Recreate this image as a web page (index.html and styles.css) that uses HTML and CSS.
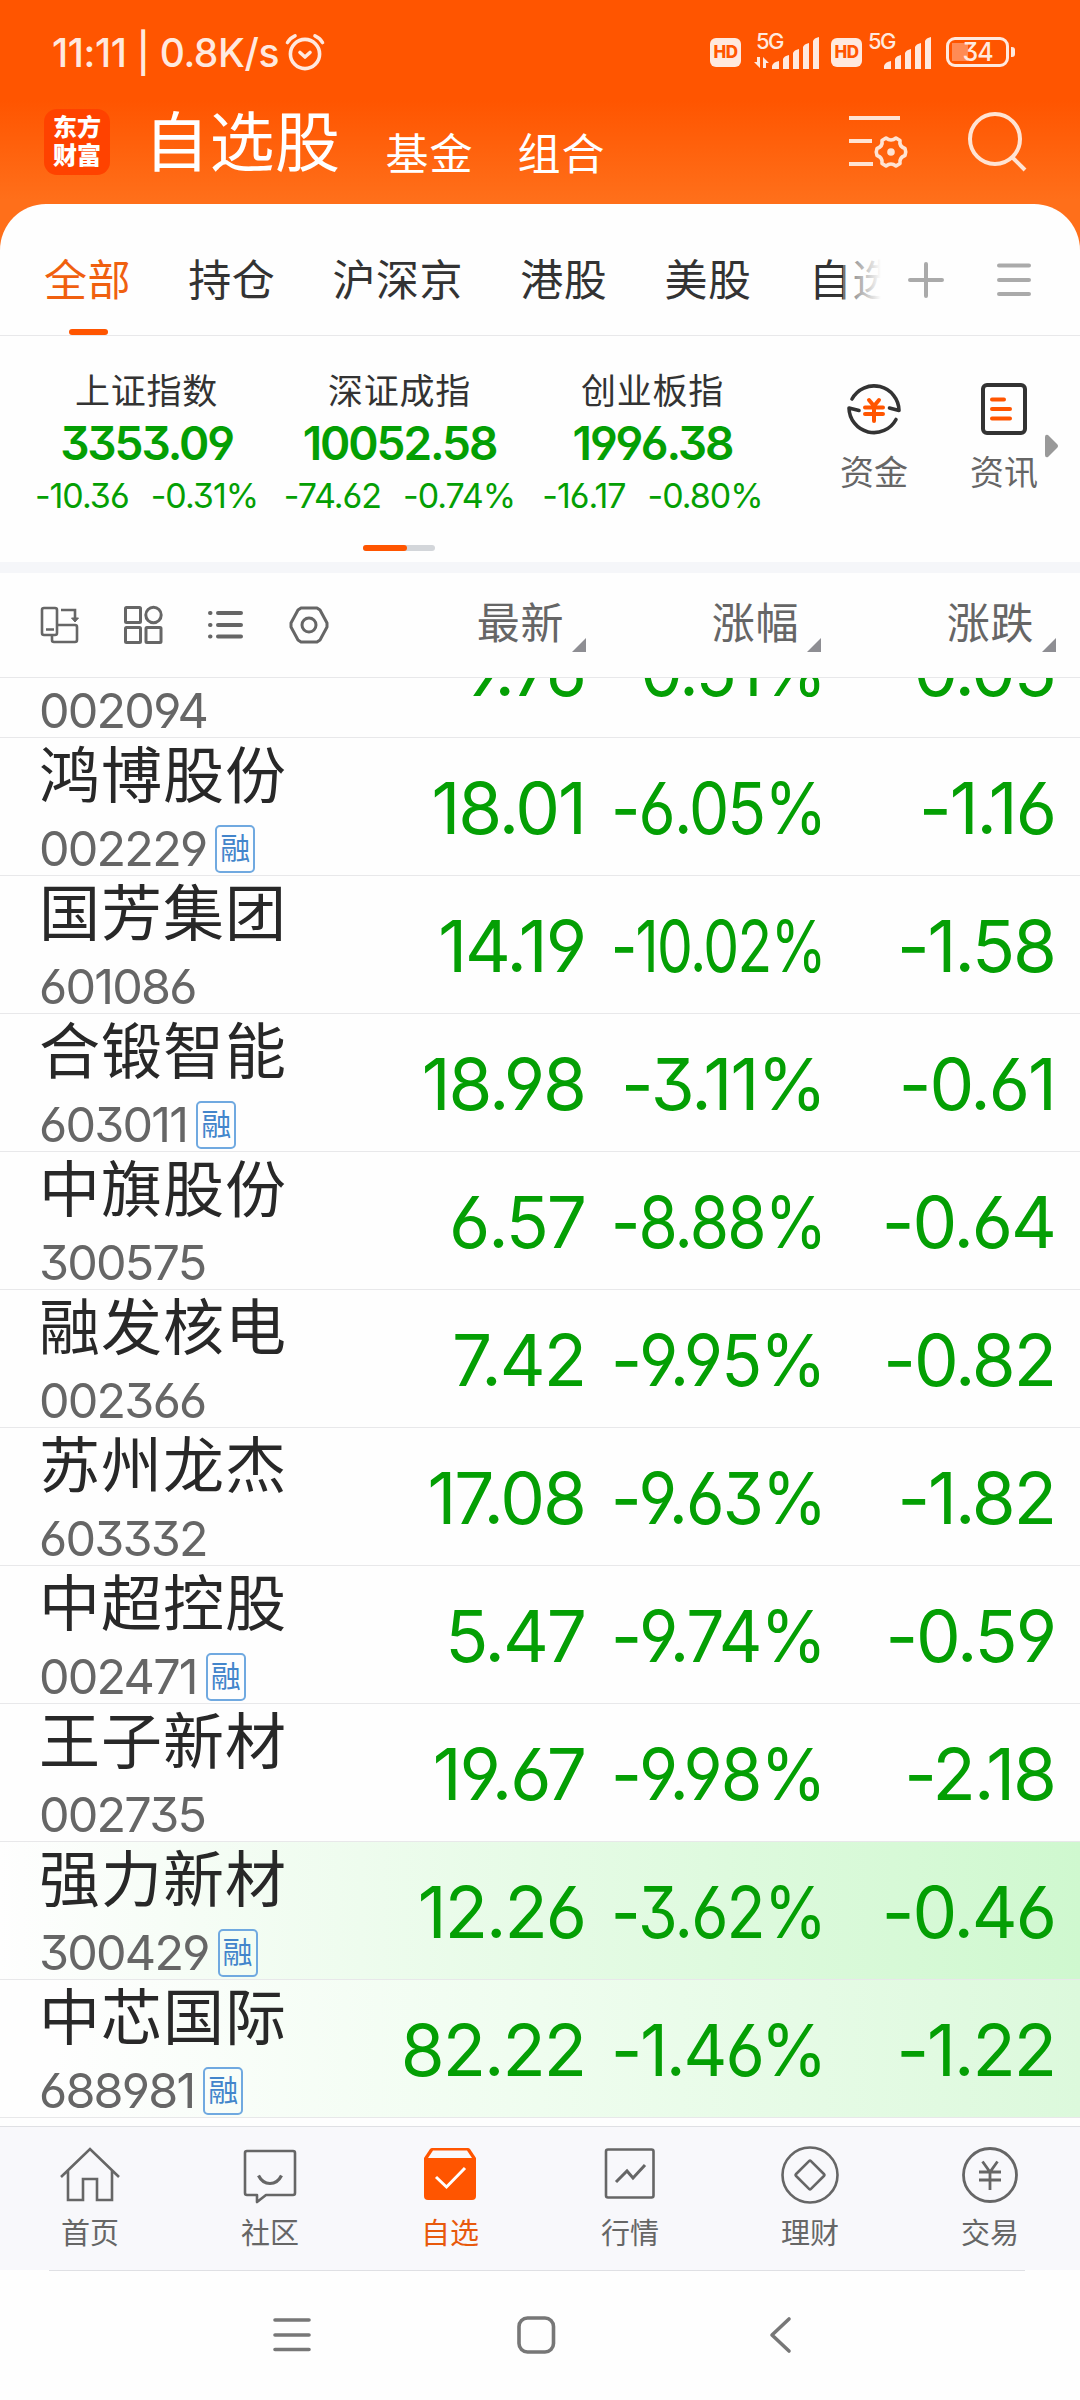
FILE: index.html
```html
<!DOCTYPE html>
<html lang="zh-CN">
<head>
  <meta charset="UTF-8" />
  <meta name="viewport" content="width=device-width, initial-scale=1.0"/>
  <title>自选股</title>
  <link rel="stylesheet" href="styles.css">
</head>
<body>
  <div class="app">
    <header class="top">
      <div class="status">
        <span class="clock">11:11 | 0.8K/s</span>
        <svg class="alarm" width="40" height="38" viewBox="0 0 40 38" fill="none" stroke="currentColor" stroke-width="3.6" stroke-linecap="round" stroke-linejoin="round">
          <circle cx="20" cy="21" r="14.6"/>
          <path d="M2.5 9.5Q5 5 10 2.8M37.500 9.500Q35 5 30 2.800M15 19.500l5 4.500 5-4.500"/>
        </svg>
        <span class="hd">HD</span>
        <span class="signal">
          <span class="net">5G</span>
          <svg width="68" height="36" viewBox="0 0 68 36" fill="currentColor">
            <path d="M5 23h3v11L2 28h3zM11 34V23l6 6h-3v5z"/>
            <path d="M20 35v-3q1-4 7-5v8zM31 35V25q1-3 6-4v14zM41 35V19q1-3 6-4v20zM51 35V13q1-3 6-4v26zM61 35V7q1-3 6-4v32z"/>
          </svg>
        </span>
        <span class="hd hd-2">HD</span>
        <span class="signal signal-2">
          <span class="net">5G</span>
          <svg width="68" height="36" viewBox="0 0 68 36" fill="currentColor">
            <path d="M20 35v-3q1-4 7-5v8zM31 35V25q1-3 6-4v14zM41 35V19q1-3 6-4v20zM51 35V13q1-3 6-4v26zM61 35V7q1-3 6-4v32z"/>
          </svg>
        </span>
        <span class="battery">34</span>
      </div>
      <div class="titlebar">
        <div class="logo"><span>东方</span><span>财富</span></div>
        <h1>自选股</h1>
        <span class="sub">基金</span>
        <span class="sub">组合</span>
        <svg class="manage" width="60" height="56" viewBox="0 0 60 56" fill="none" stroke="currentColor" stroke-width="4">
          <path d="M0 4h51M0 27h23M0 50h24"/>
          <path stroke-width="3.600" stroke-linejoin="round" d="M37 24q5 4 10 0l4 2.500q-1 6 5 8 1.500 3.500 0 7-6 2-5 8l-4 2.500q-5-4-10 0l-4-2.500q1-6-5-8-1.500-3.500 0-7 6-2 5-8z"/>
          <circle cx="42" cy="38" r="3.800" fill="currentColor" stroke="none"/>
        </svg>
        <svg class="search" width="60" height="62" viewBox="0 0 60 62" fill="none" stroke="currentColor" stroke-width="4">
          <circle cx="28" cy="29" r="25"/>
          <path d="M45 47l13 13"/>
        </svg>
      </div>
    </header>

    <main class="sheet">
      <nav class="groups">
        <div class="group-list">
          <span class="group active">全部</span>
          <span class="group">持仓</span>
          <span class="group">沪深京</span>
          <span class="group">港股</span>
          <span class="group">美股</span>
          <span class="group">自选</span>
        </div>
        <svg class="add" width="36" height="38" viewBox="0 0 36 38" stroke="currentColor" stroke-width="4" stroke-linecap="round"><path d="M2 19h32M18 3v32"/></svg>
        <svg width="36" height="38" viewBox="0 0 36 38" stroke="currentColor" stroke-width="4" stroke-linecap="round"><path d="M3 4.500h30M3 19h30M3 33h30"/></svg>
      </nav>

      <section class="market">
        <div class="indices">
          <div class="index">
            <div class="index-name">上证指数</div>
            <div class="index-value">3353.09</div>
            <div class="index-diff"><span>-10.36</span><span>-0.31%</span></div>
          </div>
          <div class="index">
            <div class="index-name">深证成指</div>
            <div class="index-value">10052.58</div>
            <div class="index-diff"><span>-74.62</span><span>-0.74%</span></div>
          </div>
          <div class="index">
            <div class="index-name">创业板指</div>
            <div class="index-value">1996.38</div>
            <div class="index-diff"><span>-16.17</span><span>-0.80%</span></div>
          </div>
        </div>
        <div class="links">
          <div class="link">
            <svg width="56" height="56" viewBox="0 0 56 56" fill="none" stroke="#333" stroke-width="3.600" stroke-linecap="round" stroke-linejoin="round">
              <path d="M6 18A25 25 0 0 1 53 29.500l-9.500-2.500M50 38.500A25 25 0 0 1 3 27l10 2.500"/>
              <path stroke="#f50" stroke-width="4" d="M23 19l5 6 5-6M19 26.500h18M19 33h18M28 26v14"/>
            </svg>
            <span>资金</span>
          </div>
          <div class="link">
            <svg width="56" height="56" viewBox="0 0 56 56" fill="none" stroke="#333" stroke-width="4" stroke-linecap="round">
              <rect x="7" y="4" width="42" height="48" rx="4"/>
              <path stroke="#f50" d="M16 18.500h12M16 28h18M16 37.500h18"/>
            </svg>
            <span>资讯</span>
          </div>
        </div>
        <svg class="more" width="14" height="24" viewBox="0 0 14 24" fill="#999"><path d="M0 3q0-3 3-2l9 9q2 2 0 4l-9 9q-3 1-3-2z"/></svg>
        <div class="pager"><i></i></div>
      </section>

      <div class="columns">
        <div class="tools">
          <svg width="40" height="40" viewBox="0 0 40 40" fill="none" stroke="currentColor" stroke-width="2.600">
            <path d="M4 3h11q2 0 2 2v23q0 2-2 2H4q-2 0-2-2V5q0-2 2-2zM6 24.500h8M17 20h18q2 0 2 2v13q0 2-2 2H14q-2 0-2-2v-5M21 5h14v9"/>
            <path d="M31.500 13h7L35 17z" fill="currentColor" stroke-width="1"/>
          </svg>
          <svg width="40" height="40" viewBox="0 0 40 40" fill="none" stroke="currentColor" stroke-width="3">
            <rect x="2.500" y="2.500" width="15" height="15" rx="1"/><circle cx="30.500" cy="10" r="7.700"/>
            <rect x="2.500" y="22.500" width="15" height="15" rx="1"/><rect x="23" y="22.500" width="15" height="15" rx="1"/>
          </svg>
          <svg width="40" height="40" viewBox="0 0 40 40" fill="none" stroke="currentColor" stroke-width="4" stroke-linecap="round">
            <path d="M4 8h.5M4 20h.5M4 31.500h.5M12 8h23M12 20h23M12 31.500h23"/>
          </svg>
          <svg width="40" height="40" viewBox="0 0 40 40" fill="none" stroke="currentColor" stroke-width="3" stroke-linejoin="round">
            <path d="M12 3h16l3 2 7 13v4l-7 13-3 2H12l-3-2-7-13v-4L9 5z"/><circle cx="20" cy="20" r="7"/>
          </svg>
        </div>
        <span class="col-head">最新</span>
        <span class="col-head">涨幅</span>
        <span class="col-head">涨跌</span>
      </div>

      <div class="list" id="list"></div>
    </main>

    <nav class="tabbar">
      <a class="tab">
        <svg width="60" height="60" viewBox="0 0 60 60" fill="none" stroke="currentColor" stroke-width="2.600">
          <path d="M1 33L30 5l29 28M8 27v29h15V35h14v21h15V27"/>
        </svg>首页
      </a>
      <a class="tab">
        <svg width="60" height="60" viewBox="0 0 60 60" fill="none" stroke="currentColor" stroke-width="2.600" stroke-linejoin="round">
          <path d="M7 7h46q2 0 2 2v40q0 2-2 2H26l-9 7v-7H7q-2 0-2-2V9q0-2 2-2z"/>
          <path stroke-width="3.200" d="M18.500 31.500q4 8 11.500 8t11.500-8"/>
        </svg>社区
      </a>
      <a class="tab active">
        <svg width="60" height="60" viewBox="0 0 60 60" fill="none">
          <path fill="#f50" d="M12 4h36q1 0 2 1l6 9v38q0 4-4 4H8q-4 0-4-4V14l6-9q1-1 2-1z"/>
          <path fill="#f9f9fb" d="M13 6.500h34l5 7.500h-44z"/>
          <path stroke="#fff" stroke-width="3" d="M16 33l10.500 10L45 24"/>
        </svg>自选
      </a>
      <a class="tab">
        <svg width="60" height="60" viewBox="0 0 60 60" fill="none" stroke="currentColor" stroke-width="2.600">
          <rect x="6" y="5.500" width="47.500" height="48" rx="2"/>
          <path stroke-width="3" d="M16 38l11-11 6 7 12-13"/>
        </svg>行情
      </a>
      <a class="tab">
        <svg width="60" height="60" viewBox="0 0 60 60" fill="none" stroke="currentColor" stroke-width="2.600" stroke-linejoin="round">
          <circle cx="30" cy="31" r="27.500"/>
          <rect x="19.500" y="20.500" width="21" height="21" rx="1" transform="rotate(45 30 31)"/>
        </svg>理财
      </a>
      <a class="tab">
        <svg width="60" height="60" viewBox="0 0 60 60" fill="none" stroke="currentColor" stroke-width="2.800">
          <circle cx="30" cy="31" r="26.500"/>
          <path d="M22.500 17.500L30 28l7.500-10.500M19 28h22M19 36h22M30 28v18"/>
        </svg>交易
      </a>
    </nav>

    <div class="sysnav">
      <svg width="44" height="44" viewBox="0 0 44 44" fill="none" stroke="currentColor" stroke-width="3.600" stroke-linecap="round"><path d="M5 7h34M5 22h34M5 36.500h34"/></svg>
      <svg width="44" height="44" viewBox="0 0 44 44" fill="none" stroke="currentColor" stroke-width="3.600"><rect x="5" y="5" width="34.500" height="34" rx="8.500"/></svg>
      <svg width="44" height="44" viewBox="0 0 44 44" fill="none" stroke="currentColor" stroke-width="3.600" stroke-linecap="round" stroke-linejoin="round"><path d="M31 6L14 22l17 16"/></svg>
    </div>
  </div>

  <script>
    // name, code, price, percent, change, margin trading, row highlight
    const stocks = [
      ['青岛金王', '002094', '9.76', '-0.51%', '-0.05', false, ''],
      ['鸿博股份', '002229', '18.01', '-6.05%', '-1.16', true, ''],
      ['国芳集团', '601086', '14.19', '-10.02%', '-1.58', false, ''],
      ['合锻智能', '603011', '18.98', '-3.11%', '-0.61', true, ''],
      ['中旗股份', '300575', '6.57', '-8.88%', '-0.64', false, ''],
      ['融发核电', '002366', '7.42', '-9.95%', '-0.82', false, ''],
      ['苏州龙杰', '603332', '17.08', '-9.63%', '-1.82', false, ''],
      ['中超控股', '002471', '5.47', '-9.74%', '-0.59', true, ''],
      ['王子新材', '002735', '19.67', '-9.98%', '-2.18', false, ''],
      ['强力新材', '300429', '12.26', '-3.62%', '-0.46', true, 'flash'],
      ['中芯国际', '688981', '82.22', '-1.46%', '-1.22', true, 'flash-soft']
    ];

    document.getElementById('list').innerHTML = stocks.map(([name, code, price, pct, diff, margin, flash]) => `
      <div class="row ${flash}">
        <div class="stock">
          <div class="name">${name}</div>
          <div class="code">${code}${margin ? '<span class="tag">融</span>' : ''}</div>
        </div>
        <div class="num"><span>${price}</span></div>
        <div class="num pct"><span>${pct}</span></div>
        <div class="num"><span>${diff}</span></div>
      </div>`).join('');

    // squeeze percentages that are wider than their column
    const maxWidth = 214;
    document.querySelectorAll('.pct span').forEach(el => {
      const w = el.offsetWidth;
      if (w > maxWidth) el.style.transform = `scaleX(${maxWidth / w})`;
    });
  </script>
</body>
</html>
```
FILE: styles.css
```css
:root {
  --orange: #ff5500;
  --green: #049f04;
  --text: #333;
  --gray: #666;
  --line: #e8e8ea;
}
* {
  box-sizing: border-box;
}
body {
  margin: 0;
  font-family: Inter, "Noto Sans CJK SC", sans-serif;
  font-feature-settings: "cv03", "cv04", "cv09";
  color: var(--text);
  background: #fefefe;
}
svg {
  display: block;
  flex: none;
}
.app {
  width: 1080px;
  height: 2400px;
  display: flex;
  flex-direction: column;
  overflow: hidden;
}

/* header */
.top {
  height: 260px;
  flex: none;
  background: linear-gradient(#ff5500 100px, #ff6f1a 200px);
  color: #fff;
}
.status {
  display: flex;
  align-items: center;
  height: 104px;
  padding: 0 65px 0 52px;
  color: #ffe9df;
}
.clock {
  font-size: 39px;
  font-weight: 500;
  letter-spacing: -0.4px;
  white-space: nowrap;
}
.alarm {
  margin-left: 6px;
  margin-right: auto;
}
.hd {
  width: 31px;
  height: 29px;
  line-height: 29px;
  border-radius: 6px;
  background: #ffe9df;
  color: var(--orange);
  font-size: 17px;
  font-weight: 800;
  letter-spacing: -0.5px;
  text-align: center;
}
.hd-2 {
  margin-left: 11px;
}
.signal {
  position: relative;
  margin-left: 11px;
}
.signal-2 {
  margin-left: 2px;
}
.net {
  position: absolute;
  left: 4px;
  top: -5px;
  font-size: 22px;
  line-height: 24px;
  font-weight: 500;
  letter-spacing: -1.5px;
}
.battery {
  position: relative;
  width: 63px;
  height: 30px;
  margin-left: 14px;
  margin-right: 6px;
  border: 3px solid #ffe9df;
  border-radius: 9px;
  font-size: 25px;
  line-height: 25px;
  font-weight: 500;
  letter-spacing: -1px;
  text-align: center;
  background: linear-gradient(90deg, #ff8b55 16px, transparent 16px) 3px 3px / 100% 18px no-repeat;
}
.battery::after {
  content: "";
  position: absolute;
  right: -9px;
  top: 7px;
  width: 4px;
  height: 10px;
  border-radius: 0 3px 3px 0;
  background: #ffe9df;
}
.titlebar {
  display: flex;
  height: 78px;
  padding-left: 44px;
}
.logo {
  width: 66px;
  height: 66px;
  margin-top: 5px;
  padding-top: 5px;
  border-radius: 13px;
  background: #ff4200;
  font-size: 24px;
  font-weight: 900;
  line-height: 28px;
  text-align: center;
}
.logo span {
  display: block;
}
h1 {
  margin: 0 0 0 34px;
  font-size: 65px;
  font-weight: 400;
  line-height: 78px;
  letter-spacing: 0.5px;
}
.sub {
  margin-left: 45px;
  padding-top: 17px;
  font-size: 43px;
  line-height: 66px;
  letter-spacing: 1px;
}
.sub + .sub {
  margin-left: 44px;
}
.manage {
  margin: 10px 58px 0 auto;
  color: #ffe3d3;
}
.search {
  margin: 6px 53px 0 0;
  color: #ffe3d3;
}

/* sheet */
.sheet {
  height: 1922px;
  margin-top: -56px;
  flex: none;
  border-radius: 46px 46px 0 0;
  background: #fefefe;
}
.groups {
  display: flex;
  align-items: center;
  height: 132px;
  padding: 20px 48px 0 44px;
  border-bottom: 1px solid var(--line);
  color: #aaa;
}
.group-list {
  position: relative;
  display: flex;
  gap: 57px;
  width: 837px;
  height: 111px;
  overflow: hidden;
}
.group-list::after {
  content: "";
  position: absolute;
  right: 0;
  top: 0;
  width: 38px;
  height: 100px;
  background: linear-gradient(90deg, rgba(254,254,254,0.3), #fefefe);
}
.group {
  position: relative;
  flex: none;
  color: var(--text);
  font-size: 43px;
  line-height: 113px;
  letter-spacing: 0.6px;
}
.group.active {
  color: #f0600f;
}
.group.active::after {
  content: "";
  position: absolute;
  left: 25px;
  bottom: 0;
  width: 39px;
  height: 6px;
  border-radius: 3px;
  background: var(--orange);
}
.add {
  margin-left: 27px;
  margin-right: 52px;
}

/* market overview */
.market {
  position: relative;
  display: flex;
  height: 237px;
  padding-left: 20px;
  border-bottom: 11px solid #f5f6f9;
}
.index {
  width: 253px;
  text-align: center;
  color: var(--green);
}
.indices {
  display: flex;
  padding-top: 31px;
}
.index-name {
  font-size: 35px;
  line-height: 48px;
  letter-spacing: 0.8px;
  color: var(--text);
}
.index-value {
  font-size: 46px;
  font-weight: 600;
  line-height: 57px;
  letter-spacing: -2.1px;
}
.index-diff {
  display: flex;
  justify-content: center;
  gap: 22px;
  font-size: 34px;
  line-height: 47px;
  letter-spacing: -1px;
}
.links {
  display: flex;
  padding: 45px 0 0 30px;
}
.link {
  width: 130px;
  display: flex;
  flex-direction: column;
  align-items: center;
  color: var(--gray);
  font-size: 34px;
  line-height: 48px;
}
.link svg {
  margin-bottom: 12px;
}
.more {
  margin: 98px 0 0 -24px;
}
.pager {
  position: absolute;
  left: 363px;
  top: 209px;
  width: 72px;
  height: 6px;
  border-radius: 3px;
  background: #d3d6da;
}
.pager i {
  display: block;
  width: 44px;
  height: 6px;
  border-radius: 3px;
  background: var(--orange);
}

/* list head */
.columns {
  display: flex;
  align-items: center;
  height: 105px;
  padding-left: 40px;
  border-bottom: 1px solid var(--line);
  color: var(--gray);
}
.tools {
  display: flex;
  gap: 43px;
  width: 311px;
}
.col-head {
  position: relative;
  width: 235px;
  margin-top: -5px;
  padding-right: 22px;
  text-align: right;
  font-size: 43px;
  line-height: 50px;
  letter-spacing: 0.6px;
}
.col-head::after {
  content: "";
  position: absolute;
  right: 0;
  bottom: -4px;
  border: 7px solid #8e8e93;
  border-top-color: transparent;
  border-left-color: transparent;
}

/* stock rows */
.list {
  height: 1448px;
  overflow: hidden;
}
.row {
  display: flex;
  height: 138px;
  padding-left: 39px;
  border-bottom: 1px solid var(--line);
}
.row:first-child {
  margin-top: -78px;
}
.flash {
  background: linear-gradient(90deg, #fefefe, #e6fbe6 50%, #cff8cf);
}
.flash-soft {
  background: linear-gradient(90deg, #fefefe 5%, #effdef 50%, #dcf9dc);
}
.stock {
  width: 311px;
}
.name {
  height: 84px;
  padding-top: 1px;
  font-size: 61px;
  line-height: 74px;
  letter-spacing: 1px;
  color: #282828;
  white-space: nowrap;
}
.code {
  display: flex;
  align-items: center;
  height: 53px;
  color: var(--gray);
  font-size: 48.5px;
  letter-spacing: -1.8px;
}
.tag {
  width: 40px;
  height: 48px;
  margin-left: 9px;
  border: 2px solid #70a9e0;
  border-radius: 5px;
  color: #4385cb;
  font-size: 30px;
  line-height: 43px;
  letter-spacing: 0;
  text-align: center;
}
.num {
  display: flex;
  align-items: center;
  justify-content: flex-end;
  width: 235px;
  padding-top: 2px;
  color: var(--green);
  font-size: 71px;
  line-height: 72px;
  letter-spacing: -2px;
}
.num span {
  transform-origin: right;
}
.pct span {
  margin-right: -5px;
}

/* bottom bars */
.tabbar {
  display: flex;
  height: 144px;
  flex: none;
  border-top: 1px solid #dfe0e4;
  background: #f8f8fb;
}
.tab {
  width: 180px;
  padding-top: 17px;
  display: flex;
  flex-direction: column;
  align-items: center;
  color: var(--gray);
  font-size: 29px;
  line-height: 59px;
}
.tab.active {
  color: #e8590c;
}
.sysnav {
  display: flex;
  gap: 200px;
  margin: 0 55px 0 49px;
  padding: 42px 0 0 221px;
  border-top: 1px solid #dfe0e4;
  padding-bottom: 43px;
  color: #777;
}
```
